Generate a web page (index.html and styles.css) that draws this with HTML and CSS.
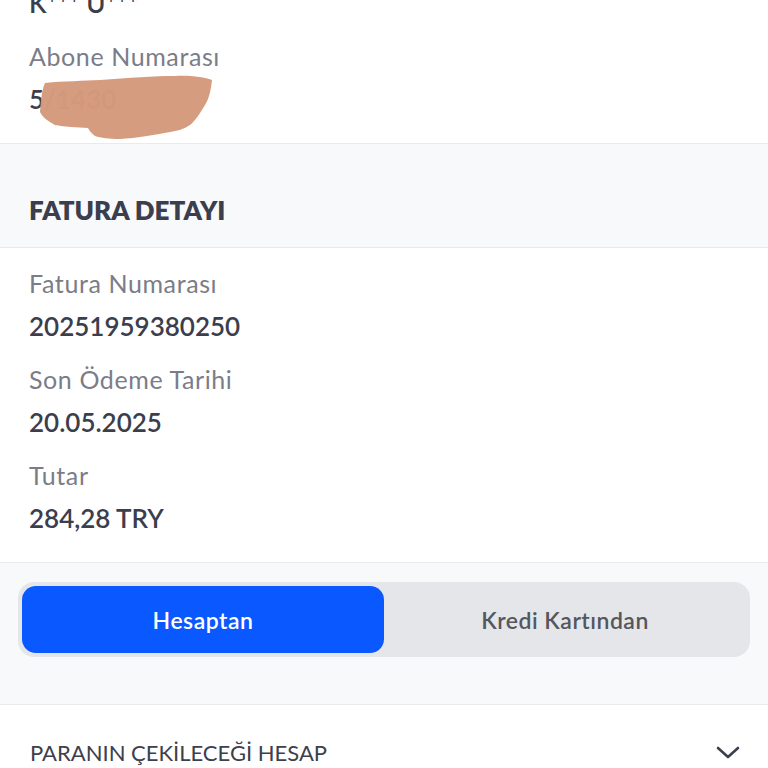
FILE: index.html
```html
<!DOCTYPE html>
<html lang="tr">
  <head>
    <meta charset="UTF-8" />
    <meta name="viewport" content="width=device-width, initial-scale=1.0" />
    <title>Fatura Ödeme</title>
    <link rel="stylesheet" href="styles.css">
  </head>
  <body>
    <div class="info-block top-block">
      <div class="value">K*** U***</div>
      <div class="label">Abone Numarası</div>
      <div class="value masked">
        5<span class="masked-rest">/1430</span>
        <svg class="smudge" width="174" height="66" viewBox="0 0 174 66">
          <path d="M1 37 C2 25 3 14 6 8 C25 6 45 6 61 5 C90 3 115 1 136 1 C150 0 165 2 173 5 C172 15 170 24 166 30 C160 40 156 46 151 50 C145 54 138 56 131 57 C115 60 98 63 81 64 C70 64 62 63 56 61 C52 58 50 55 49 53 C38 52 26 52 16 50 C9 46 3 42 1 37 Z" fill="#d4987a" fill-opacity="0.96" />
        </svg>
      </div>
    </div>

    <div class="section-title">FATURA DETAYI</div>

    <div class="info-block">
      <div class="label">Fatura Numarası</div>
      <div class="value">20251959380250</div>
      <div class="label">Son Ödeme Tarihi</div>
      <div class="value">20.05.2025</div>
      <div class="label">Tutar</div>
      <div class="value">284,28 TRY</div>
    </div>

    <div class="payment-type">
      <div class="segment">
        <button class="segment-button active">Hesaptan</button>
        <button class="segment-button">Kredi Kartından</button>
      </div>
    </div>

    <div class="account-select">
      <span>PARANIN ÇEKİLECEĞİ HESAP</span>
      <svg class="chevron" width="24" height="14" viewBox="0 0 24 14">
        <path d="M2 2 L12 11 L22 2" fill="none" stroke="#3d404c" stroke-width="2.6" stroke-linecap="round" stroke-linejoin="round" />
      </svg>
    </div>
  </body>
</html>
```

FILE: styles.css
```css
body {
  margin: 0;
  background-color: #ffffff;
  font-family: Lato, "Open Sans", sans-serif;
  color: #3b3e4d;
  overflow: hidden;
}
.info-block {
  padding: 20px 29px 6px;
  border-bottom: 1px solid #e9eaee;
}
.top-block {
  margin-top: -15px;
  padding-top: 0;
}
.label {
  font-size: 25px;
  letter-spacing: 0.6px;
  color: #7a7d88;
  line-height: 30px;
  margin-bottom: 10px;
}
.value {
  font-size: 26px;
  font-weight: 600;
  line-height: 36px;
  margin-bottom: 20px;
}
.masked {
  position: relative;
}
.masked-rest {
  color: #8e9099;
}
.smudge {
  position: absolute;
  left: 10px;
  top: -6px;
}
.section-title {
  background-color: #f8f9fb;
  padding: 51px 29px 22px;
  line-height: 30px;
  font-size: 26px;
  font-weight: 800;
  border-bottom: 1px solid #e9eaee;
}
.payment-type {
  background-color: #f8f9fb;
  padding: 19px 18px 47px;
  border-bottom: 1px solid #e9eaee;
}
.segment {
  display: flex;
  background-color: #e5e6ea;
  border-radius: 16px;
  padding: 4px;
}
.segment-button {
  flex: 1;
  height: 67px;
  border: none;
  border-radius: 14px;
  background: transparent;
  font-family: Lato, "Open Sans", sans-serif;
  font-size: 23px;
  font-weight: 600;
  letter-spacing: 0.5px;
  color: #55575f;
}
.segment-button.active {
  background-color: #0a58ff;
  color: #ffffff;
}
.account-select {
  display: flex;
  justify-content: space-between;
  align-items: center;
  padding: 33px 28px 0 30px;
  line-height: 30px;
  font-size: 22px;
  color: #3d404c;
}
```
